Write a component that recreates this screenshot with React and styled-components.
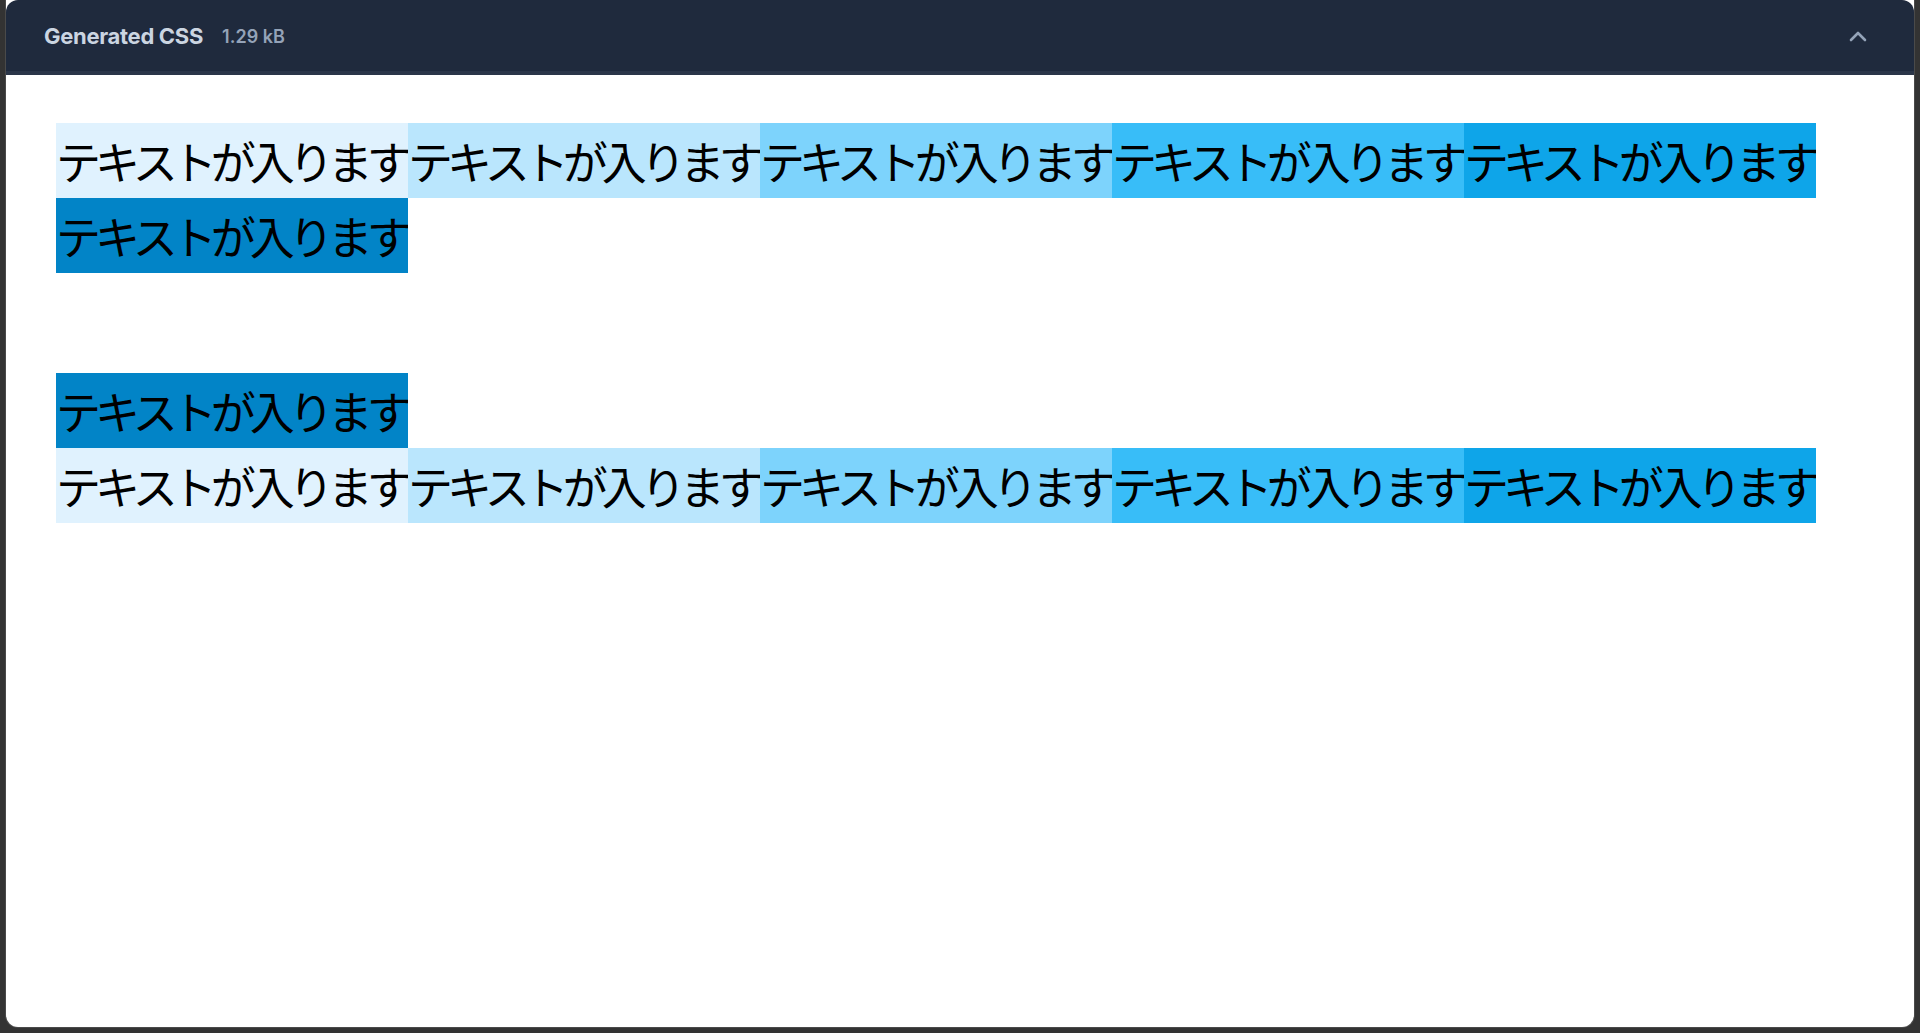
import styled, { createGlobalStyle } from 'styled-components';

const GlobalStyle = createGlobalStyle`
  html, body {
    margin: 0;
    padding: 0;
    background: #333333;
    font-family: Inter, "Noto Sans", sans-serif;
  }
`;

const shades = ['#e0f2fe', '#bae6fd', '#7dd3fc', '#38bdf8', '#0ea5e9', '#0284c7'];

const App = () => {
  return (
    <>
      <GlobalStyle />
      <Page>
        <Panel>
          <Header>
            <Title>Generated CSS</Title>
            <Size>1.29 kB</Size>
            <Toggle aria-label="collapse">
              <svg width="18" height="12" viewBox="0 0 18 12" fill="none">
                <path d="M2 10 L9 3 L16 10" stroke="#94a3b8" strokeWidth="2.6" strokeLinecap="round" strokeLinejoin="round" />
              </svg>
            </Toggle>
          </Header>
          <Preview>
            <FlexRow $wrap="wrap">
              {shades.map((c) => (
                <Item key={c} $bg={c}>テキストが入ります</Item>
              ))}
            </FlexRow>
            <FlexRow $wrap="wrap-reverse">
              {shades.map((c) => (
                <Item key={c} $bg={c}>テキストが入ります</Item>
              ))}
            </FlexRow>
          </Preview>
        </Panel>
      </Page>
    </>
  );
};

const Page = styled.div`
  height: 1033px;
  padding: 0 6px 6px 6px;
  box-sizing: border-box;
  display: flex;
`;

const Panel = styled.div`
  flex: 1;
  display: flex;
  flex-direction: column;
  background: #ffffff;
  border-radius: 0 0 12px 12px;
  overflow: hidden;
  box-shadow: 0 0 0 1px #4a4a4a;
`;

const Header = styled.div`
  height: 71px;
  flex-shrink: 0;
  display: flex;
  align-items: center;
  padding: 0 38px;
  background: #1f2a3d;
  border-bottom: 4px solid #2b3649;
  border-radius: 12px 12px 0 0;
`;

const Title = styled.span`
  font-size: 22px;
  font-weight: 700;
  color: #cbd5e1;
  letter-spacing: -0.3px;
`;

const Size = styled.span`
  margin-left: 19px;
  margin-top: 2px;
  font-size: 18px;
  font-weight: 600;
  color: #94a3b8;
`;

const Toggle = styled.button`
  margin-left: auto;
  margin-right: 9px;
  background: none;
  border: none;
  padding: 0;
  display: flex;
  cursor: pointer;
`;

const Preview = styled.div`
  padding: 48px 50px;
  display: flex;
  flex-direction: column;
  gap: 100px;
`;

const FlexRow = styled.div`
  display: flex;
  flex-wrap: ${(p) => p.$wrap};
`;

const Item = styled.span`
  width: 352px;
  height: 75px;
  display: flex;
  align-items: center;
  overflow: hidden;
  background: ${(p) => p.$bg};
  color: #000000;
  font-family: "Noto Sans CJK JP", sans-serif;
  font-size: 45px;
  letter-spacing: -6px;
  white-space: nowrap;
`;

export default App;
